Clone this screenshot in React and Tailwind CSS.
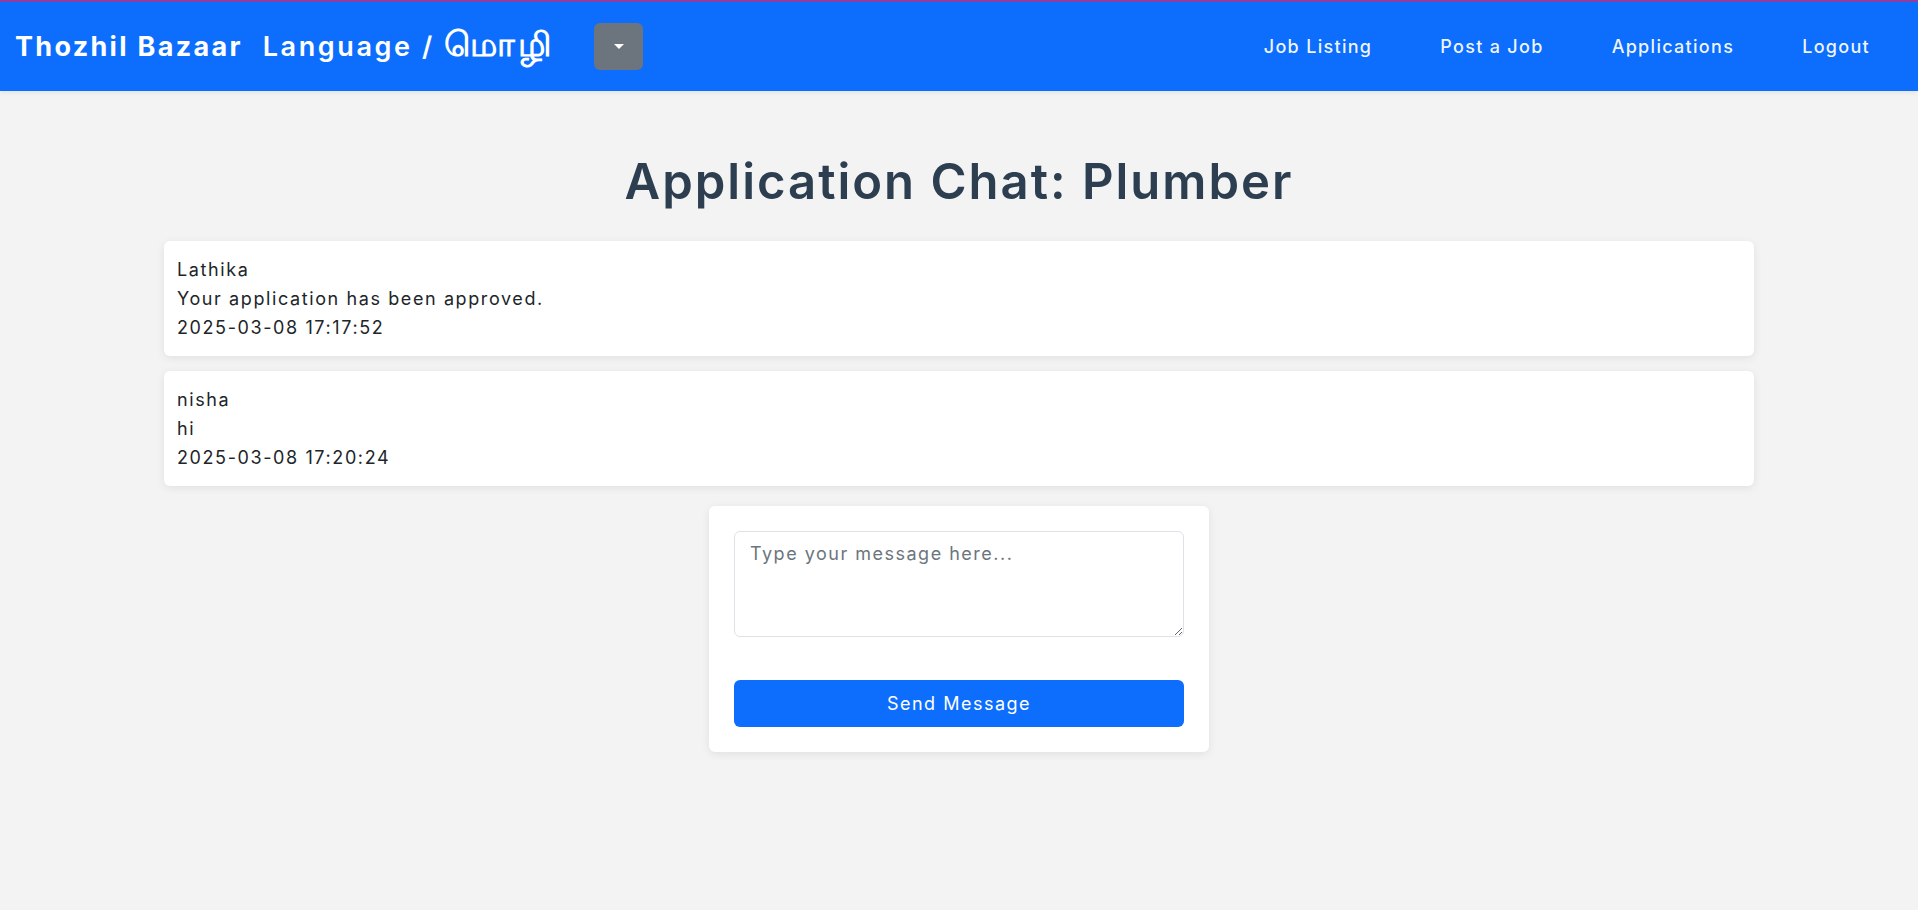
import React, { useState } from 'react';

const MESSAGES = [
  { sender: 'Lathika', text: 'Your application has been approved.', time: '2025-03-08 17:17:52' },
  { sender: 'nisha', text: 'hi', time: '2025-03-08 17:20:24' },
];

const NAV_LINKS = ['Job Listing', 'Post a Job', 'Applications', 'Logout'];

export default function App() {
  const [message, setMessage] = useState('');

  return (
    <div className="min-h-[910px] bg-[#f3f3f3] font-['Inter','Noto_Sans',sans-serif]">
      {/* Navbar */}
      <nav className="h-[91px] bg-[#0d6efd] border-t-2 border-[#8e3fa0] flex items-center justify-between pl-[15px] pr-[48px] shadow-[0_2px_4px_rgba(0,0,0,0.06)]">
        <div className="flex items-center">
          <span className="text-white font-bold text-[27px] leading-[34px] tracking-[2.3px]">Thozhil Bazaar</span>
          <span className="text-white font-semibold text-[27px] leading-[34px] tracking-[2.6px] ml-[20px] -mt-[3px]">
            Language / <span className="font-bold text-[34px] leading-none tracking-[3px]">மொழி</span>
          </span>
          <button className="ml-[40px] w-[49px] h-[47px] bg-[#6c757d] rounded-[6px] flex items-center justify-center">
            <span className="w-0 h-0 border-l-[5px] border-r-[5px] border-t-[5px] border-l-transparent border-r-transparent border-t-white" />
          </button>
        </div>
        <div className="flex items-center gap-[68px]">
          {NAV_LINKS.map(link => (
            <a key={link} href="#" className="text-white/95 font-medium text-[18px] tracking-[1.3px]">
              {link}
            </a>
          ))}
        </div>
      </nav>

      {/* Content */}
      <div className="w-[1590px] mx-auto">
        <h2 className="text-center text-[#2c3e50] font-semibold text-[49px] tracking-[2px] leading-[58px] mt-[62px] mb-[30px]">
          Application Chat: Plumber
        </h2>

        <div className="flex flex-col gap-[15px]">
          {MESSAGES.map(msg => (
            <div
              key={msg.time}
              className="bg-white rounded-[6px] shadow-[0_2px_8px_rgba(0,0,0,0.08)] px-[13px] py-[14px] text-[#212529] text-[18px] tracking-[1.6px] leading-[29px]"
            >
              <div>{msg.sender}</div>
              <div>{msg.text}</div>
              <div>{msg.time}</div>
            </div>
          ))}
        </div>

        {/* Form */}
        <div className="w-[500px] mx-auto mt-[20px] bg-white rounded-[6px] shadow-[0_2px_8px_rgba(0,0,0,0.08)] p-[25px]">
          <textarea
            value={message}
            onChange={e => setMessage(e.target.value)}
            placeholder="Type your message here..."
            className="block w-full h-[106px] border border-[#dee2e6] rounded-[6px] px-[15px] py-[8px] text-[18px] tracking-[1.5px] leading-[28px] placeholder:text-[#6c757d] outline-none resize-y"
          />
          <button className="mt-[43px] w-full h-[47px] bg-[#0d6efd] text-white rounded-[6px] text-[18px] tracking-[1.5px]">
            Send Message
          </button>
        </div>
      </div>
    </div>
  );
}
